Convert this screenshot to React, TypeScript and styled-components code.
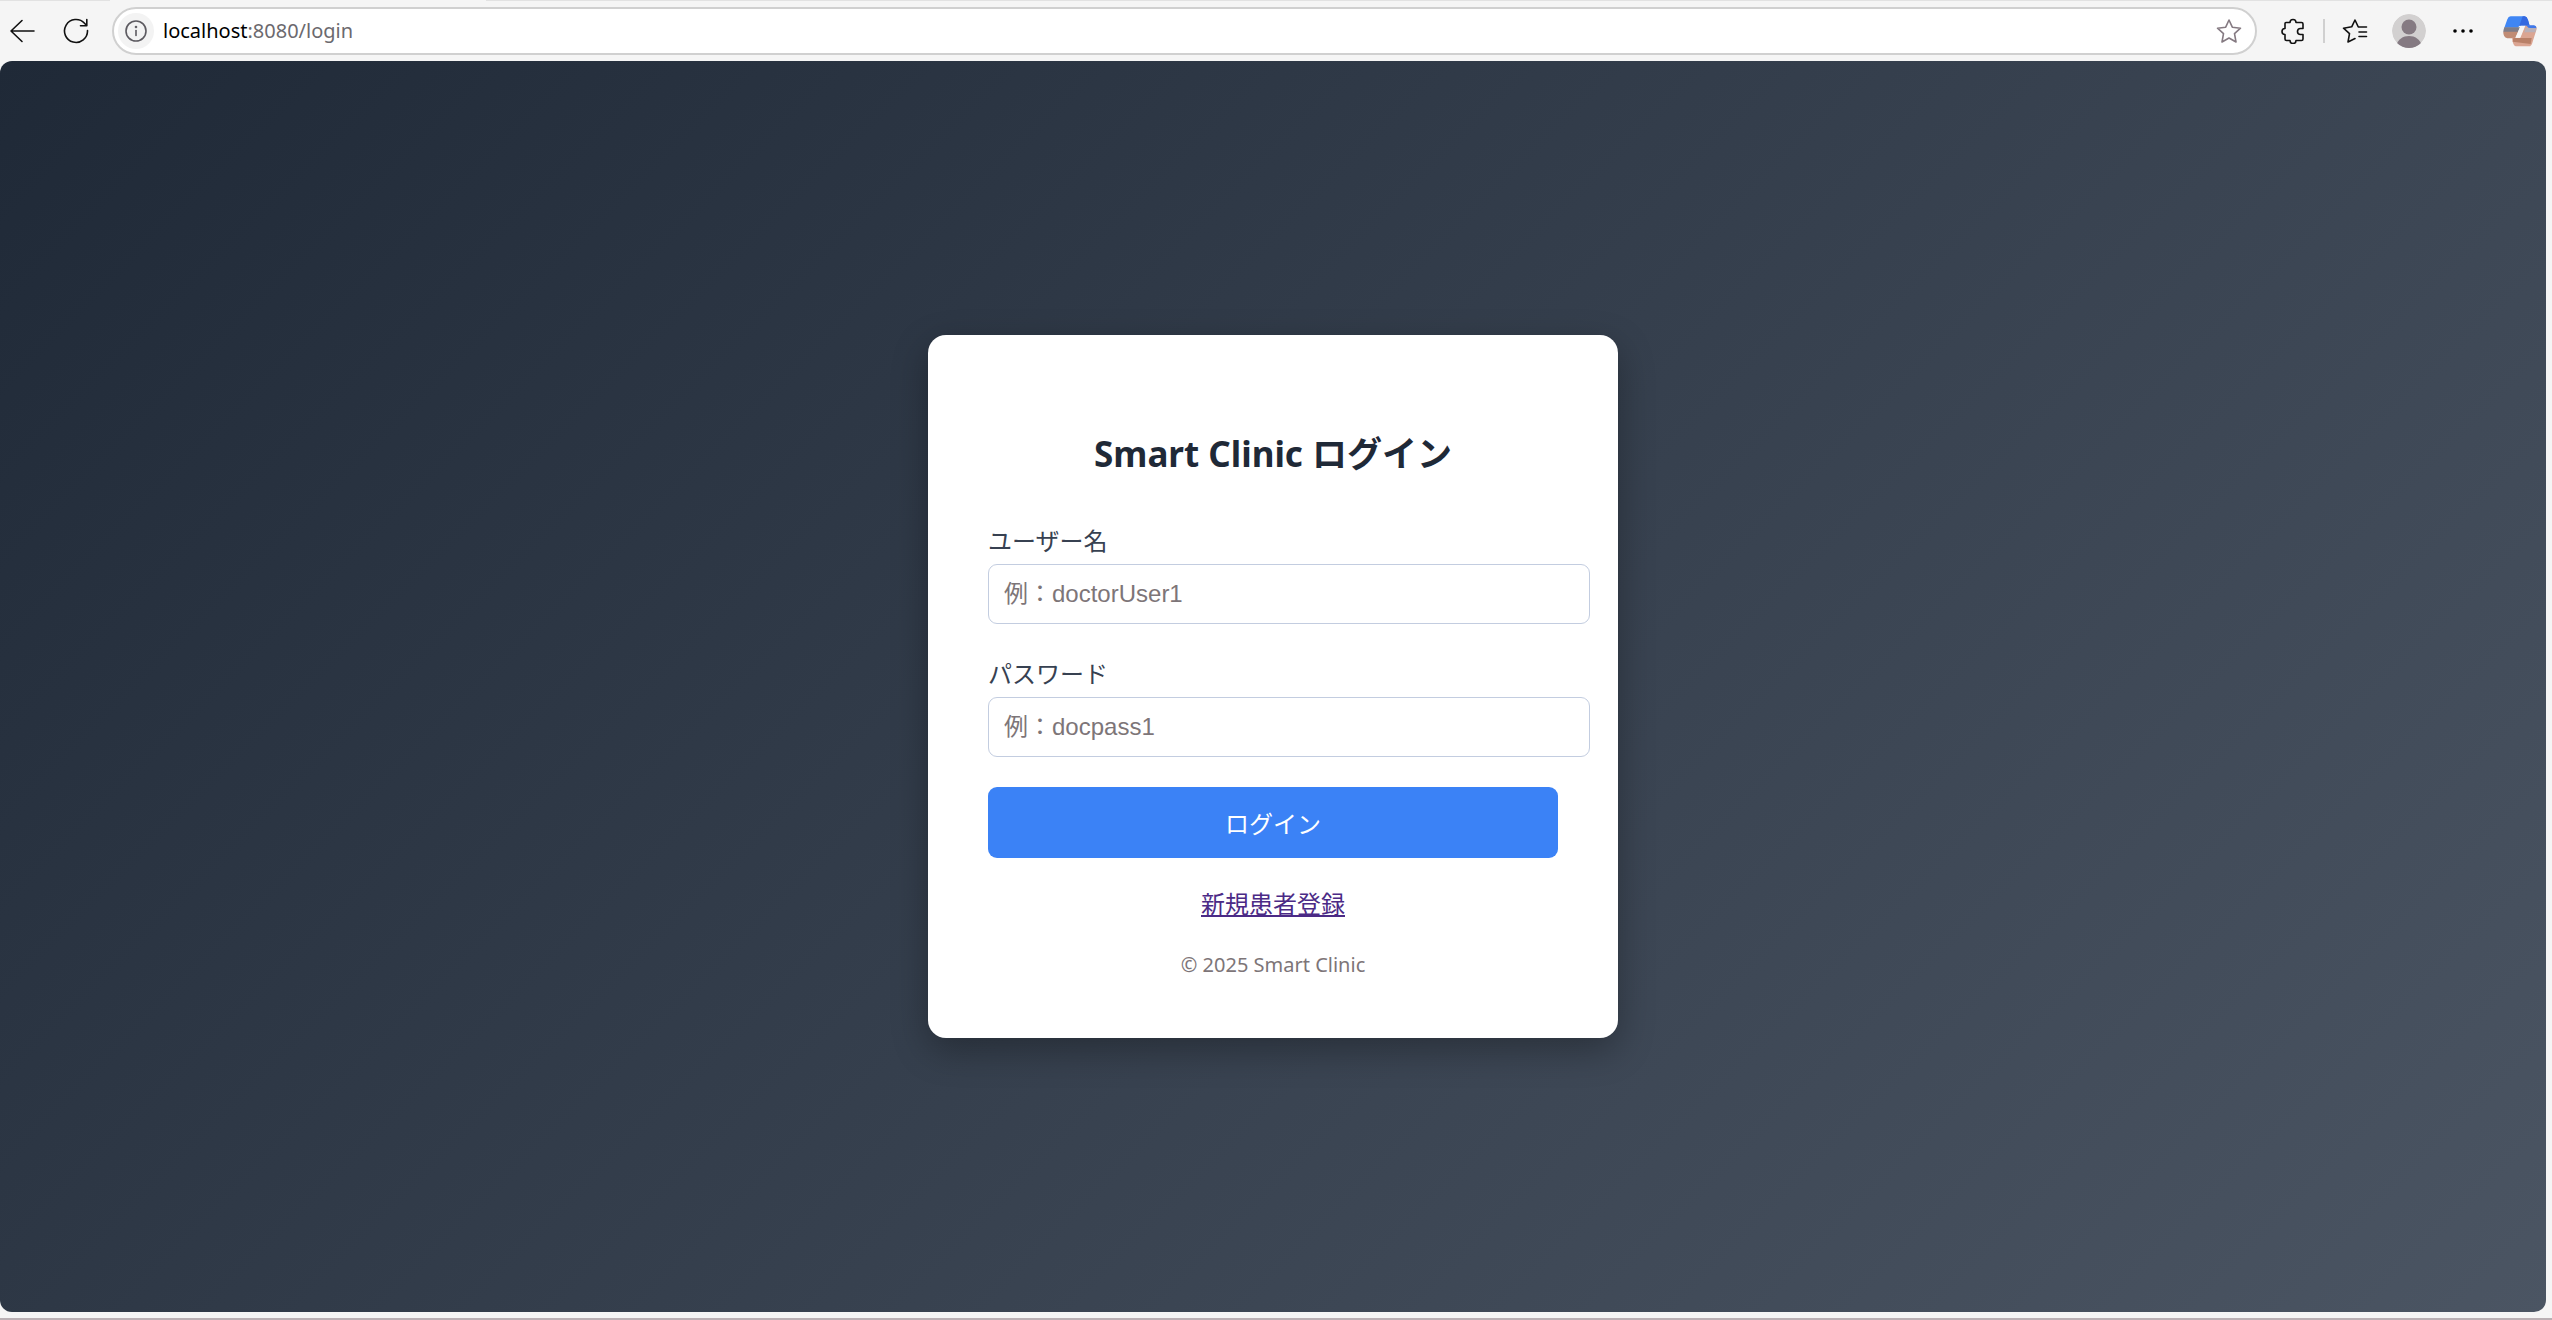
import React, { useState } from "react";
import styled, { createGlobalStyle } from "styled-components";

const GlobalStyle = createGlobalStyle`
  body {
    margin: 0;
    background: #f5f5f5;
    font-family: "Noto Sans", "Noto Sans CJK JP", sans-serif;
  }
`;

const Window = styled.div`
  display: flex;
  flex-direction: column;
  box-sizing: border-box;
  min-height: 100vh;
  padding-bottom: 6px;
  border-bottom: 2px solid #bab0b4;
  background: #f5f5f5;
`;

const TabEdge = styled.div`
  display: grid;
  grid-template-columns: 110px 376px 1fr;
  height: 1px;
`;

const InactiveTabs = styled.span`
  background: #e2e2e2;
`;

const Toolbar = styled.header`
  display: flex;
  align-items: center;
  height: 60px;
  padding: 0 12px 0 8px;
`;

const IconButton = styled.button<{ $width?: number; $color?: string }>`
  display: flex;
  align-items: center;
  justify-content: center;
  width: ${({ $width }) => $width ?? 28}px;
  height: 36px;
  padding: 0;
  border: 0;
  border-radius: 6px;
  background: none;
  color: ${({ $color }) => $color ?? "#111"};
  flex: none;
`;

const NavGroup = styled.nav`
  display: flex;
  gap: 26px;
  margin-right: 22px;
`;

const AddressBar = styled.div`
  display: flex;
  flex: 1;
  align-items: center;
  box-sizing: border-box;
  height: 48px;
  padding: 0 12px 0 4px;
  border: 2px solid #d0d0d0;
  border-radius: 24px;
  background: #fff;
`;

const InfoButton = styled.button`
  display: flex;
  align-items: center;
  justify-content: center;
  width: 36px;
  height: 36px;
  padding: 0;
  border: 0;
  border-radius: 50%;
  background: #f3f3f3;
  color: #5c5a60;
`;

const AddressText = styled.button`
  flex: 1;
  padding: 0 0 0 9px;
  border: 0;
  background: none;
  color: #6b696e;
  font: 20px/28px "Noto Sans", sans-serif;
  text-align: left;
  cursor: text;
`;

const Host = styled.span`
  color: #000;
`;

const AddressInput = styled.input`
  flex: 1;
  padding: 0 0 0 9px;
  border: 0;
  outline: 0;
  background: none;
  font: 20px/28px "Noto Sans", sans-serif;
`;

const Tools = styled.div`
  display: flex;
  align-items: center;
  margin-left: 22px;
`;

const Divider = styled.span`
  width: 2px;
  height: 24px;
  margin: 0 16px;
  background: #d0d0d0;
`;

const ToolGroup = styled.div`
  display: flex;
  gap: 23px;
`;

const Page = styled.main`
  display: flex;
  flex: 1;
  align-items: center;
  justify-content: center;
  margin-right: 6px;
  border-radius: 12px;
  background: linear-gradient(135deg, #1f2937, #4b5563);
`;

const Card = styled.section`
  width: 570px;
  padding: 60px;
  border-radius: 18px;
  background: #fff;
  box-shadow: 0 12px 36px rgba(0, 0, 0, 0.3);
  text-align: center;
`;

const Title = styled.h1`
  margin: 32px 0 44px;
  color: #1f2937;
  font-size: 35px;
  font-weight: 700;
  line-height: 54px;
`;

const Form = styled.form`
  display: flex;
  flex-direction: column;
`;

const Field = styled.div`
  display: flex;
  flex-direction: column;
  margin-bottom: 34px;
  text-align: left;

  &:last-of-type {
    margin-bottom: 30px;
  }
`;

const Label = styled.label`
  margin-bottom: 7px;
  color: #374151;
  font-size: 24px;
  line-height: 32px;
`;

const Input = styled.input`
  width: 100%;
  height: 58px;
  padding: 0 15px;
  border: 1px solid #c3cde0;
  border-radius: 9px;
  background: #fff;
  color: #1f2937;
  font: 24px "Liberation Sans", "Noto Sans CJK JP", sans-serif;

  &::placeholder {
    color: #7d7578;
  }
`;

const SubmitButton = styled.button`
  height: 71px;
  border: 0;
  border-radius: 9px;
  background: #3b82f6;
  color: #fff;
  font: 24px "Noto Sans CJK JP", sans-serif;
`;

const Register = styled.p`
  margin: 30px 0 32px;
  font-size: 24px;
  line-height: 32px;
`;

const RegisterLink = styled.a`
  color: #4b2a86;
  text-decoration: underline;
`;

const Copyright = styled.footer`
  color: #7d7578;
  font-size: 20px;
  line-height: 26px;
`;

const line = {
  fill: "none",
  stroke: "currentColor",
  strokeWidth: 1.6,
  strokeLinecap: "round",
  strokeLinejoin: "round",
} as const;

const BackIcon = () => (
  <svg width="26" height="24" viewBox="0 0 26 24" {...line}>
    <path d="M25 12H2M13 1.5L2 12L13 22.5" />
  </svg>
);

const ReloadIcon = () => (
  <svg width="26" height="26" viewBox="0 0 26 26" {...line}>
    <path d="M24.500 12.500A11.500 11.500 0 1 1 21.500 5.200L23.600 7.500M23.800 1.500V7.800H17.500" />
  </svg>
);

const InfoIcon = () => (
  <svg width="24" height="24" viewBox="0 0 24 24" {...line}>
    <circle cx="12" cy="12" r="10" />
    <path d="M12 11.5V16.500" />
    <circle cx="12" cy="8" r="0.5" />
  </svg>
);

const StarIcon = () => (
  <svg width="26" height="26" viewBox="0 0 26 26" {...line}>
    <path d="M13 2L16.300 9.200L24.500 10.200L18.500 15.700L20 24L13 20L6 24L7.500 15.700L1.500 10.200L9.700 9.200Z" />
  </svg>
);

const PuzzleIcon = () => (
  <svg width="26" height="26" viewBox="0 0 26 26" {...line}>
    <path d="M6 4.500H10A3 3 0 0 1 16 4.500H21.500A1.500 1.500 0 0 1 23 6V10.500H20.500A3 3 0 0 0 20.500 16.500H23V21A1.500 1.500 0 0 1 21.500 22.500H16A3 3 0 0 1 10 22.500H6.500A1.500 1.500 0 0 1 5 21V16.500A3 3 0 0 1 5 10.500V5.500A1 1 0 0 1 6 4.500" />
  </svg>
);

const FavoritesIcon = () => (
  <svg width="26" height="26" viewBox="0 0 26 26" {...line}>
    <path d="M24.500 9H16.300L13 2L9.700 8.800L1.500 10.200L7.500 15.700L6 24L13 20.500M17 14H24.500M17 18.500H24.500" />
  </svg>
);

const AvatarIcon = () => (
  <svg width="34" height="34" viewBox="0 0 34 34">
    <clipPath id="avatar-clip">
      <circle cx="17" cy="17" r="17" />
    </clipPath>
    <g clipPath="url(#avatar-clip)">
      <circle cx="17" cy="17" r="17" fill="#d2d0d0" />
      <circle cx="17" cy="13" r="7.5" fill="#857a82" />
      <path d="M4 32C6 25 11 22 17 22S28 25 30 32V34H4Z" fill="#857a82" />
    </g>
  </svg>
);

const MoreIcon = () => (
  <svg width="22" height="22" viewBox="0 0 22 22" fill="#000">
    <circle cx="3" cy="11" r="1.8" />
    <circle cx="11" cy="11" r="1.8" />
    <circle cx="19" cy="11" r="1.8" />
  </svg>
);

/* Drawn in 3x units: blue lid, grey and tan left lobe, pink right lobe, white fold. */
const CopilotIcon = () => (
  <svg width="34" height="32" viewBox="969 44 102 96">
    <path d="M992 48H1034Q1041 49 1044 59L1049 76H1018L1014 82H973L982 57Q985 48 992 48Z" fill="#3f86f4" />
    <path d="M1028 48H1034Q1041 49 1044 59L1049 76H1018Z" fill="#3568e0" />
    <path d="M973 81H1020L1014 96H970Q970 88 973 81Z" fill="#7f7d88" />
    <path d="M970 94H1015L1006 114H982Q969 110 970 94Z" fill="#c08b74" />
    <path d="M1034 76H1062Q1070 77 1070 86L1058 124Q1055 138 1046 138H1008Q1001 136 998 124L996 112H1020Z" fill="#dba592" />
    <path d="M1038 75H1062Q1070 77 1069 84L1046 83Z" fill="#3f78ea" />
    <path d="M1037 82L1069 84L1066 96H1033Z" fill="#b9b0b8" />
    <path d="M1000 113H1055L1052 131L998 124Z" fill="#b98068" />
    <path d="M1022 76H1036L1021 112H1006Z" fill="#f7f5f5" />
  </svg>
);

function Address() {
  const [editing, setEditing] = useState(false);
  const [path, setPath] = useState(":8080/login");

  if (editing) {
    return (
      <AddressInput
        autoFocus
        aria-label="アドレス"
        value={`localhost${path}`}
        onChange={(e) => setPath(e.target.value.replace(/^localhost/, ""))}
        onBlur={() => setEditing(false)}
      />
    );
  }
  return (
    <AddressText type="button" onClick={() => setEditing(true)}>
      <Host>localhost</Host>
      {path}
    </AddressText>
  );
}

export default function App() {
  return (
    <Window>
      <GlobalStyle />
      <TabEdge>
        <InactiveTabs />
        <span />
        <InactiveTabs />
      </TabEdge>
      <Toolbar>
        <NavGroup>
          <IconButton aria-label="戻る">
            <BackIcon />
          </IconButton>
          <IconButton aria-label="更新">
            <ReloadIcon />
          </IconButton>
        </NavGroup>
        <AddressBar>
          <InfoButton aria-label="サイト情報">
            <InfoIcon />
          </InfoButton>
          <Address />
          <IconButton $color="#857a82" aria-label="お気に入りに追加">
            <StarIcon />
          </IconButton>
        </AddressBar>
        <Tools>
          <IconButton aria-label="拡張機能">
            <PuzzleIcon />
          </IconButton>
          <Divider />
          <ToolGroup>
            <IconButton aria-label="お気に入り">
              <FavoritesIcon />
            </IconButton>
            <IconButton $width={34} aria-label="プロファイル">
              <AvatarIcon />
            </IconButton>
            <IconButton aria-label="設定など">
              <MoreIcon />
            </IconButton>
            <IconButton $width={40} aria-label="Copilot">
              <CopilotIcon />
            </IconButton>
          </ToolGroup>
        </Tools>
      </Toolbar>
      <Page>
        <Card>
          <Title>Smart Clinic ログイン</Title>
          <Form onSubmit={(e) => e.preventDefault()}>
            <Field>
              <Label htmlFor="username">ユーザー名</Label>
              <Input id="username" type="text" placeholder="例：doctorUser1" />
            </Field>
            <Field>
              <Label htmlFor="password">パスワード</Label>
              <Input id="password" type="password" placeholder="例：docpass1" />
            </Field>
            <SubmitButton type="submit">ログイン</SubmitButton>
          </Form>
          <Register>
            <RegisterLink href="#register">新規患者登録</RegisterLink>
          </Register>
          <Copyright>© 2025 Smart Clinic</Copyright>
        </Card>
      </Page>
    </Window>
  );
}
